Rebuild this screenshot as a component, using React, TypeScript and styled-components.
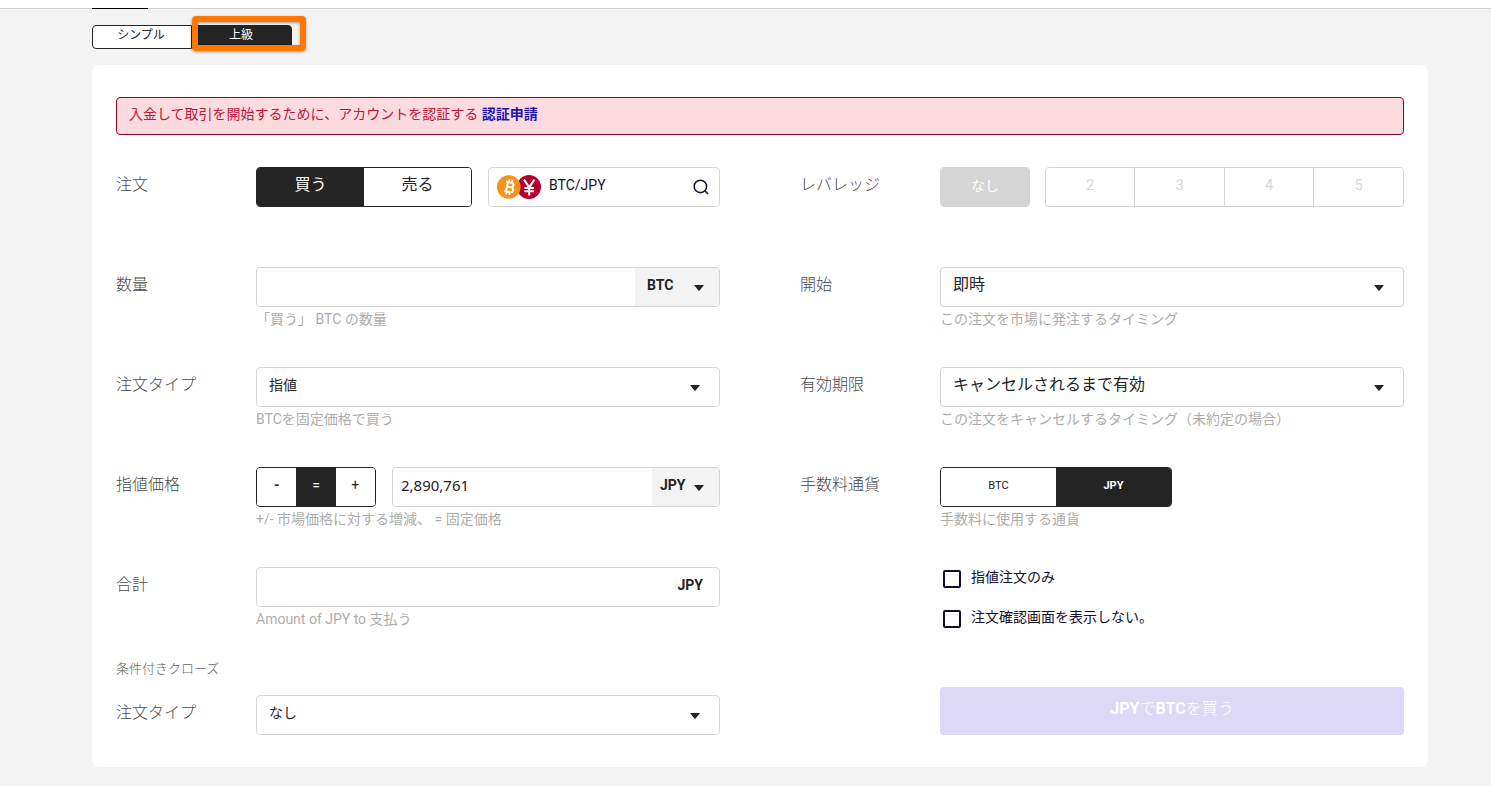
import React, { useId } from "react";
import styled, { createGlobalStyle, css } from "styled-components";

const ink = "#242424";
const navy = "#150f2d";
const line = "#d5d5d5";
const sans = `Roboto, "Noto Sans CJK JP", sans-serif`;

const GlobalStyle = createGlobalStyle`
  *, *::before, *::after { box-sizing: border-box; }
  body {
    margin: 0;
    background: #f3f3f3;
    color: ${ink};
    font-family: ${sans};
    font-size: 14px;
    font-weight: 300;
  }
  button, input, select { font: inherit; color: inherit; margin: 0; }
`;

const TopBar = styled.header`
  display: flex;
  height: 9px;
  padding-left: 92px;
  background: #fff;
  box-shadow: inset 0 -1px 0 #d0d0d0;
`;

const ActiveMarker = styled.span`
  width: 56px;
  border-bottom: 1px solid #000;
`;

const Main = styled.main`
  display: flex;
  flex-direction: column;
  align-items: stretch;
  gap: 16px;
  padding: 16px 63px 16px 92px;
`;

const Tabs = styled.div`
  position: relative;
  display: flex;
  align-self: flex-start;
`;

const Tab = styled.button<{ $active?: boolean }>`
  width: 100px;
  height: 24px;
  padding: 0 2px 4px 0;
  border: 1px solid ${ink};
  border-radius: ${(p) => (p.$active ? "0 4px 4px 0" : "4px 0 0 4px")};
  background: ${(p) => (p.$active ? ink : "#fff")};
  color: ${(p) => (p.$active ? "#fff" : ink)};
  font-size: 12px;
  font-weight: 400;
  line-height: 18px;
`;

const Highlight = styled.span`
  position: absolute;
  top: -9px;
  left: 100px;
  width: 114px;
  height: 35px;
  border: 6px solid #ff7800;
  border-radius: 4px;
  box-shadow: 0 1px 3px rgba(0, 0, 0, 0.4), inset 0 1px 3px rgba(0, 0, 0, 0.35);
  pointer-events: none;
`;

const Card = styled.form`
  display: flex;
  flex-direction: column;
  gap: 32px;
  padding: 32px 24px;
  border-radius: 8px;
  background: #fff;
`;

const Alert = styled.div`
  height: 38px;
  padding: 0 12px;
  border: 1px solid #8e0a24;
  border-radius: 4px;
  background: #fbdbdf;
  color: #bd1739;
  font-weight: 400;
  line-height: 32px;
`;

const AlertLink = styled.a`
  color: #1c16b4;
  font-weight: 700;
  text-decoration: none;
`;

const Columns = styled.div`
  display: grid;
  grid-template-columns: 1fr 1fr;
  gap: 80px;
`;

const Column = styled.div`
  display: flex;
  flex-direction: column;
  gap: 36px;
`;

const Row = styled.div<{ $compact?: boolean }>`
  display: grid;
  grid-template-columns: 140px minmax(0, 1fr);
  min-height: ${(p) => (p.$compact ? "40px" : "64px")};
`;

const labelText = css`
  color: #4a4a4a;
  font-size: 16px;
  line-height: 36px;
`;

const Label = styled.label`
  ${labelText}
`;

const GroupLabel = styled.span`
  ${labelText}
`;

const Hint = styled.p`
  margin: 0;
  color: #adadad;
  font-weight: 400;
  line-height: 24px;
`;

const Split = styled.div<{ $columns: string; $gap?: number }>`
  display: grid;
  grid-template-columns: ${(p) => p.$columns};
  gap: ${(p) => p.$gap ?? 16}px;
`;

const Segments = styled.div<{ $muted?: boolean; $half?: boolean }>`
  display: flex;
  width: ${(p) => (p.$half ? "50%" : "auto")};
  height: 40px;
  border: 1px solid ${(p) => (p.$muted ? line : ink)};
  border-radius: 4px;
  overflow: hidden;
`;

const Segment = styled.button<{ $active?: boolean; $size?: number; $bold?: boolean }>`
  flex: 1;
  padding: 0 0 ${(p) => (p.$size === 16 ? 8 : 4)}px;
  border: 0;
  background: ${(p) => (p.$active ? ink : "#fff")};
  color: ${(p) => (p.$active ? "#fff" : ink)};
  font-size: ${(p) => p.$size ?? 14}px;
  font-weight: ${(p) => (p.$bold ? 700 : 400)};

  &:disabled {
    background: ${(p) => (p.$active ? line : "#fff")};
    color: ${(p) => (p.$active ? "#fff" : line)};
  }
  &:disabled + & {
    border-left: 1px solid ${line};
  }
`;

const PairButton = styled.button`
  display: flex;
  align-items: center;
  height: 40px;
  padding: 0 10px 0 8px;
  border: 1px solid ${line};
  border-radius: 4px;
  background: #fff;
  color: ${navy};
  font-weight: 400;
`;

const PairName = styled.span`
  flex: 1;
  padding: 0 0 5px 7px;
  text-align: left;
`;

const Field = styled.div`
  position: relative;
  display: flex;
  height: 40px;
  border: 1px solid ${line};
  border-radius: 4px;
  background: #fff;
  overflow: hidden;
`;

const TextInput = styled.input`
  flex: 1;
  min-width: 0;
  padding: 0 8px 4px;
  border: 0;
  outline: 0;
  background: transparent;
  font-family: "Noto Sans", sans-serif;
  font-size: 15px;
  font-weight: 400;
`;

const SelectInput = styled.select<{ $large?: boolean }>`
  width: 100%;
  padding: 0 32px 5px 12px;
  border: 0;
  outline: 0;
  appearance: none;
  background: transparent;
  color: ${ink};
  font-size: ${(p) => (p.$large ? 16 : 14)}px;
  font-weight: 400;
`;

const UnitSelect = styled.select<{ $width: number; $inset: number }>`
  width: ${(p) => p.$width}px;
  padding: 0 0 5px ${(p) => p.$inset}px;
  border: 0;
  outline: 0;
  appearance: none;
  background: #f3f3f3;
  font-weight: 700;
`;

const Unit = styled.span`
  padding-right: 16px;
  font-weight: 700;
  line-height: 35px;
`;

const Caret = styled.svg<{ $right: number }>`
  position: absolute;
  top: 17px;
  right: ${(p) => p.$right}px;
  width: 10px;
  height: 6px;
  fill: ${ink};
  pointer-events: none;
`;

const Checks = styled.div`
  display: flex;
  flex-direction: column;
  gap: 16px;
  padding-left: 143px;
`;

const CheckLabel = styled.label`
  display: flex;
  align-items: center;
  gap: 10px;
  height: 24px;
  color: ${navy};
  font-weight: 400;
`;

const CheckBox = styled.input`
  width: 18px;
  height: 18px;
  border: 2px solid ${navy};
  border-radius: 2px;
  appearance: none;
  background: #fff;
`;

const CheckText = styled.span`
  padding-bottom: 6px;
`;

const CloseSection = styled.section`
  display: flex;
  flex-direction: column;
  gap: 16px;
  margin-top: -8px;
`;

const SectionTitle = styled.h2`
  margin: 0;
  color: #666;
  font-size: 13px;
  font-weight: 300;
  line-height: 20px;
`;

const Submit = styled.button`
  height: 48px;
  margin: auto 0 0 140px;
  padding: 0 0 8px;
  border: 0;
  border-radius: 4px;
  background: #ded8f7;
  color: #fff;
  font-size: 16px;
`;

const Strong = styled.b`
  font-weight: 700;
`;

const CaretIcon = ({ right }: { right: number }) => (
  <Caret $right={right} viewBox="0 0 10 6" aria-hidden="true">
    <path d="M0 0h10L5.6 5.5a.8.8 0 0 1-1.2 0z" />
  </Caret>
);

const PairIcon = () => (
  <svg width="45" height="24" viewBox="0 0 45 24" aria-hidden="true">
    <circle cx="32" cy="12" r="12" fill="#b4002d" />
    <path
      d="M27 4.6l5.2 7.8 5.2-7.8M32.2 12v8.6M27.4 13h9.6M27.4 16.2h9.6"
      fill="none"
      stroke="#fff"
      strokeWidth="2"
    />
    <circle cx="11.8" cy="12" r="11.8" fill="#f7931a" />
    <g transform="rotate(12 12 12)" fill="none" stroke="#fff">
      <path d="M8 7.3h5.6a2.3 2.3 0 0 1 0 4.6H9.8M13.4 11.9h.8a2.5 2.5 0 0 1 0 5H8M10 7.3v9.6" strokeWidth="2" />
      <path d="M10.8 4.4v2.8M13.8 4.4v2.8M10.8 17v2.8M13.8 17v2.8" strokeWidth="1.5" />
    </g>
  </svg>
);

const SearchIcon = () => (
  <svg width="16" height="16" viewBox="0 0 16 16" fill="none" stroke={navy} strokeWidth="1.6" aria-hidden="true">
    <circle cx="7.4" cy="7.4" r="6.2" />
    <path d="M11.8 11.8l3.2 3.2" />
  </svg>
);

type SelectRowProps = { label: string; value: string; hint?: string; large?: boolean };

function SelectRow({ label, value, hint, large }: SelectRowProps) {
  const id = useId();
  return (
    <Row $compact={!hint}>
      <Label htmlFor={id}>{label}</Label>
      <div>
        <Field>
          <SelectInput id={id} $large={large}>
            <option>{value}</option>
          </SelectInput>
          <CaretIcon right={19} />
        </Field>
        {hint && <Hint>{hint}</Hint>}
      </div>
    </Row>
  );
}

export default function App() {
  return (
    <>
      <GlobalStyle />
      <TopBar>
        <ActiveMarker />
      </TopBar>
      <Main>
        <Tabs>
          <Tab type="button">シンプル</Tab>
          <Tab type="button" $active>
            上級
          </Tab>
          <Highlight />
        </Tabs>
        <Card onSubmit={(e) => e.preventDefault()}>
          <Alert>
            入金して取引を開始するために、アカウントを認証する <AlertLink href="#verify">認証申請</AlertLink>
          </Alert>
          <Columns>
            <Column>
              <Row>
                <GroupLabel>注文</GroupLabel>
                <Split $columns="minmax(0, 1fr) 50%">
                  <Segments>
                    <Segment type="button" $active $size={16}>
                      買う
                    </Segment>
                    <Segment type="button" $size={16}>
                      売る
                    </Segment>
                  </Segments>
                  <PairButton type="button">
                    <PairIcon />
                    <PairName>BTC/JPY</PairName>
                    <SearchIcon />
                  </PairButton>
                </Split>
              </Row>
              <Row>
                <Label htmlFor="amount">数量</Label>
                <div>
                  <Field>
                    <TextInput id="amount" />
                    <UnitSelect aria-label="数量の通貨" $width={84} $inset={12}>
                      <option>BTC</option>
                    </UnitSelect>
                    <CaretIcon right={15} />
                  </Field>
                  <Hint>「買う」 BTC の数量</Hint>
                </div>
              </Row>
              <SelectRow label="注文タイプ" value="指値" hint="BTCを固定価格で買う" />
              <Row>
                <Label htmlFor="price">指値価格</Label>
                <div>
                  <Split $columns="120px minmax(0, 1fr)">
                    <Segments>
                      <Segment type="button" $bold>
                        -
                      </Segment>
                      <Segment type="button" $active>
                        =
                      </Segment>
                      <Segment type="button">+</Segment>
                    </Segments>
                    <Field>
                      <TextInput id="price" defaultValue="2,890,761" />
                      <UnitSelect aria-label="価格の通貨" $width={67} $inset={8}>
                        <option>JPY</option>
                      </UnitSelect>
                      <CaretIcon right={15} />
                    </Field>
                  </Split>
                  <Hint>+/- 市場価格に対する増減、 = 固定価格</Hint>
                </div>
              </Row>
              <Row>
                <Label htmlFor="total">合計</Label>
                <div>
                  <Field>
                    <TextInput id="total" />
                    <Unit>JPY</Unit>
                  </Field>
                  <Hint>Amount of JPY to 支払う</Hint>
                </div>
              </Row>
              <CloseSection>
                <SectionTitle>条件付きクローズ</SectionTitle>
                <SelectRow label="注文タイプ" value="なし" />
              </CloseSection>
            </Column>
            <Column>
              <Row>
                <GroupLabel>レバレッジ</GroupLabel>
                <Split $columns="1fr 4fr" $gap={15}>
                  <Segments $muted>
                    <Segment type="button" $active disabled>
                      なし
                    </Segment>
                  </Segments>
                  <Segments $muted>
                    {[2, 3, 4, 5].map((n) => (
                      <Segment key={n} type="button" disabled>
                        {n}
                      </Segment>
                    ))}
                  </Segments>
                </Split>
              </Row>
              <SelectRow label="開始" value="即時" hint="この注文を市場に発注するタイミング" large />
              <SelectRow
                label="有効期限"
                value="キャンセルされるまで有効"
                hint="この注文をキャンセルするタイミング（未約定の場合）"
                large
              />
              <Row>
                <GroupLabel>手数料通貨</GroupLabel>
                <div>
                  <Segments $half>
                    <Segment type="button" $size={11}>
                      BTC
                    </Segment>
                    <Segment type="button" $active $bold $size={11}>
                      JPY
                    </Segment>
                  </Segments>
                  <Hint>手数料に使用する通貨</Hint>
                </div>
              </Row>
              <Checks>
                <CheckLabel>
                  <CheckBox type="checkbox" />
                  <CheckText>指値注文のみ</CheckText>
                </CheckLabel>
                <CheckLabel>
                  <CheckBox type="checkbox" />
                  <CheckText>注文確認画面を表示しない。</CheckText>
                </CheckLabel>
              </Checks>
              <Submit type="submit" disabled>
                <Strong>JPY</Strong>で<Strong>BTC</Strong>を買う
              </Submit>
            </Column>
          </Columns>
        </Card>
      </Main>
    </>
  );
}
